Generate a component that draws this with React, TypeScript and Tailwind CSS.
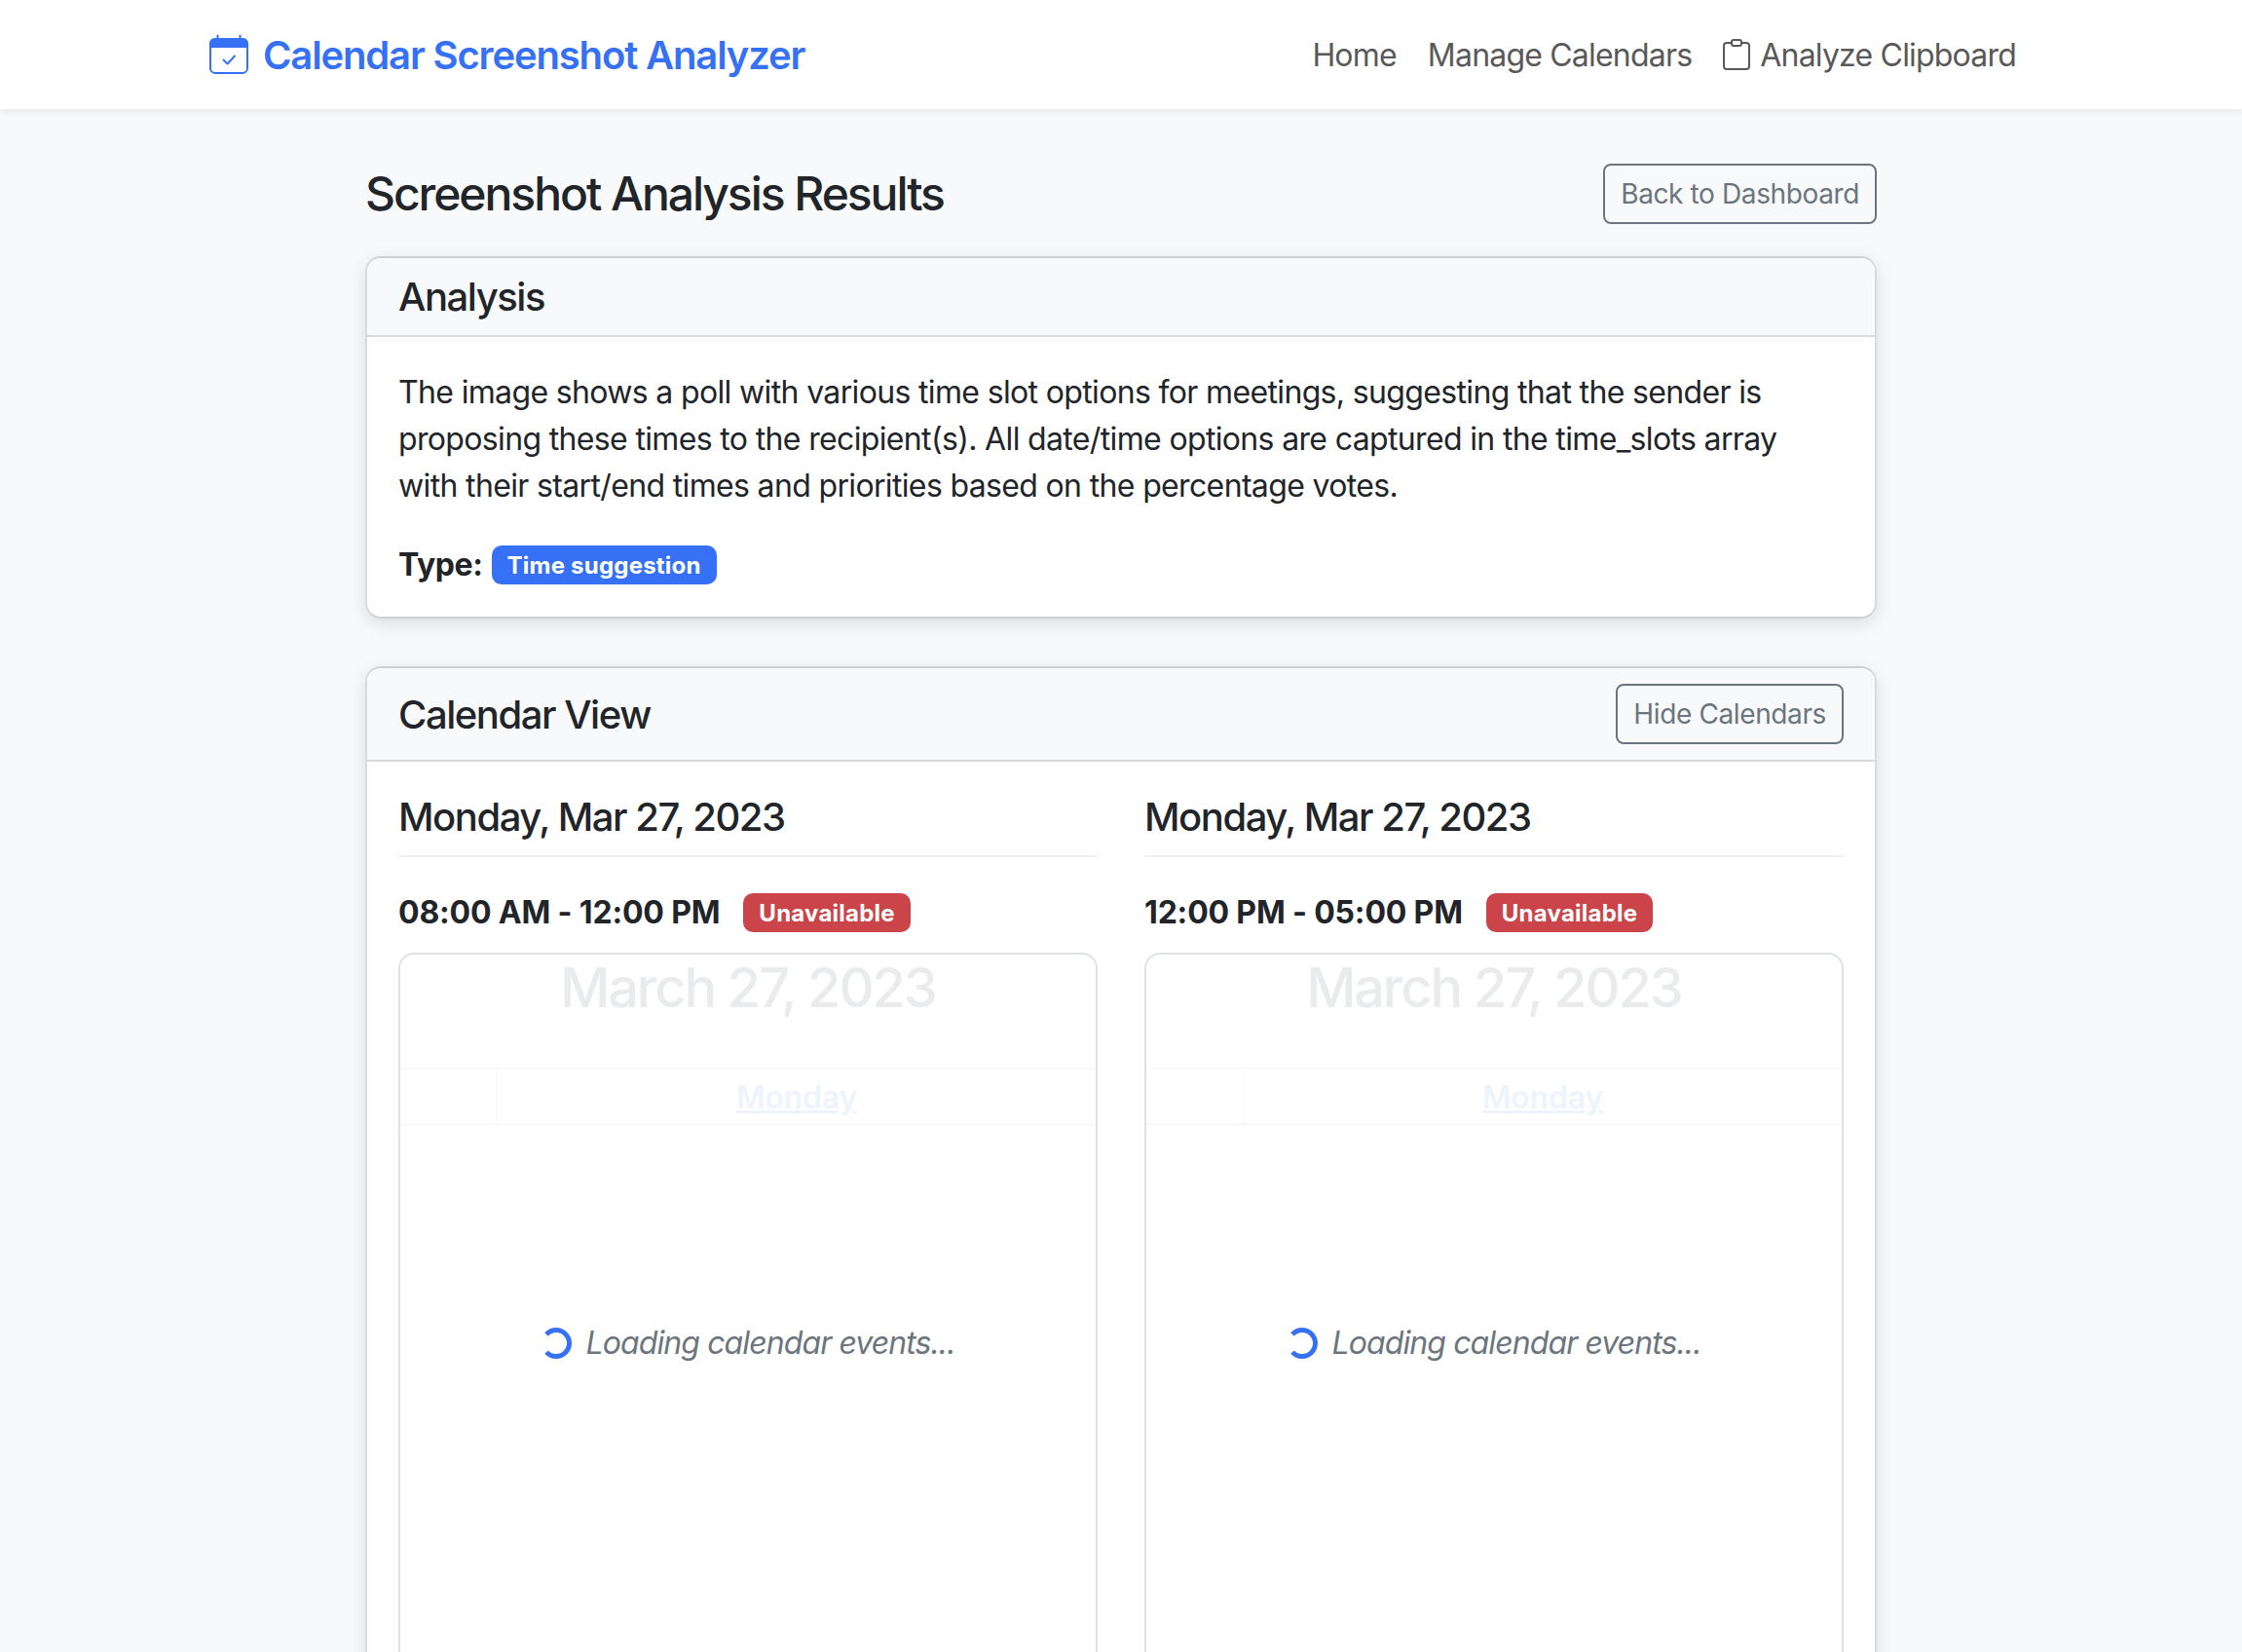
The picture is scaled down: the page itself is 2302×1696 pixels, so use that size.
const font = { fontFamily: 'Inter, "Noto Sans", sans-serif' };

function CalendarIcon() {
  return (
    <svg width="42" height="42" viewBox="0 0 42 42" className="shrink-0 text-[#3671f5]">
      <path d="M9.5 1.5v4M32.5 1.5v4" stroke="currentColor" strokeWidth="2" strokeLinecap="round" />
      <path d="M1 10a6 6 0 0 1 6-6h28a6 6 0 0 1 6 6v4H1z" fill="currentColor" />
      <rect x="2" y="5" width="38" height="35" rx="5" fill="none" stroke="currentColor" strokeWidth="2" />
      <path d="M15.5 26.5l4 4 7.5-8" fill="none" stroke="currentColor" strokeWidth="2" strokeLinecap="round" strokeLinejoin="round" />
    </svg>
  );
}

function ClipboardIcon() {
  return (
    <svg width="28" height="32" viewBox="0 0 28 32" className="shrink-0 text-[#595959]">
      <path d="M9 4H4a3 3 0 0 0-3 3v21a3 3 0 0 0 3 3h20a3 3 0 0 0 3-3V7a3 3 0 0 0-3-3h-5" fill="none" stroke="currentColor" strokeWidth="2" />
      <rect x="9" y="1" width="10" height="6" rx="2" fill="none" stroke="currentColor" strokeWidth="2" />
    </svg>
  );
}

function Spinner() {
  return (
    <svg width="32" height="32" viewBox="0 0 32 32" className="shrink-0">
      <circle cx="15" cy="16" r="13.5" fill="none" stroke="#3671f5" strokeWidth="5" strokeDasharray="65 19.8" strokeDashoffset="-52" />
    </svg>
  );
}

function OutlineButton({ label }: { label: string }) {
  return (
    <button className="h-[62px] rounded-lg border-2 border-[#6c757d] px-4 text-[28px] leading-[42px] tracking-[-0.38px] text-[#6c757d]">
      {label}
    </button>
  );
}

function Badge({ label, color }: { label: string; color: string }) {
  return (
    <span className={`inline-flex h-10 items-center rounded-[10px] px-4 pt-[2px] text-[24px] leading-none font-bold tracking-[0.22px] text-white ${color}`}>
      {label}
    </span>
  );
}

function CalendarColumn({ time }: { time: string }) {
  return (
    <div className="min-w-0">
      <h5 className="border-b-2 border-[#f0f0f0] pb-[15px] text-[40px] leading-[48px] font-medium tracking-[-1.45px] text-[#212529]">
        Monday, Mar 27, 2023
      </h5>
      <div className="mt-[37px] flex h-10 items-center gap-[24px]">
        <span className="text-[32px] leading-[48px] font-bold tracking-[-0.17px] text-[#212529]">{time}</span>
        <Badge label="Unavailable" color="bg-[#cb444a]" />
      </div>
      <div className="relative mt-[21px] h-[800px] rounded-2xl border-2 border-[#dee2e6] bg-white">
        <div className="pt-[2px] text-center text-[56px] leading-[64px] font-medium tracking-[-2.15px] text-[#eaebec]">March 27, 2023</div>
        <div className="mt-[50px] flex h-[60px] border-t-2 border-b-[3px] border-[#fafafa]">
          <div className="w-[100px] border-r-2 border-[#fafafa]" />
          <div className="flex flex-1 items-center justify-center pt-[2px] text-[32px] font-semibold tracking-[-0.2px] text-[#eef3fe] underline">
            Monday
          </div>
        </div>
        <div className="absolute inset-0 flex items-center justify-center gap-[14px] pt-[2px]">
          <Spinner />
          <span className="text-[32px] leading-[48px] tracking-[-0.9px] text-[#6c757d] italic">Loading calendar events...</span>
        </div>
      </div>
    </div>
  );
}

export default function App() {
  return (
    <div className="h-[1696px] overflow-hidden bg-[#f8f9fa]" style={font}>
      <nav className="flex h-[112px] items-center justify-between bg-white pr-[232px] pl-[214px] shadow-[0_2px_8px_rgba(0,0,0,0.08)]">
        <a className="flex items-center gap-[14px] text-[40px] font-semibold tracking-[-1.15px] text-[#3671f5]">
          <CalendarIcon />
          <span className="pt-[2px]">Calendar Screenshot Analyzer</span>
        </a>
        <div className="flex items-center gap-8 text-[32px] leading-[48px] tracking-[-0.8px] text-[#595959]">
          <a className="pt-[2px]">Home</a>
          <a className="pt-[2px]">Manage Calendars</a>
          <a className="flex items-center gap-[10px]">
            <ClipboardIcon />
            <span className="pt-[2px]">Analyze Clipboard</span>
          </a>
        </div>
      </nav>

      <main className="mx-[375px] pt-[56px]">
        <div className="flex h-[62px] items-center justify-between">
          <h3 className="text-[48px] font-medium tracking-[-2.05px] text-[#212529]">Screenshot Analysis Results</h3>
          <OutlineButton label="Back to Dashboard" />
        </div>

        <section className="mt-[33px] overflow-hidden rounded-2xl border-2 border-[#d0d1d3] border-x-[#d9dadc] bg-white shadow-[0_5px_18px_rgba(0,0,0,0.12)]">
          <div className="flex h-[81px] items-center border-b-2 border-[#d9dadb] bg-[#f8f9fa] px-8 pt-[1px]">
            <h5 className="text-[40px] font-medium tracking-[-1.45px] text-[#212529]">Analysis</h5>
          </div>
          <div className="px-8 pt-[33px] pb-[29px]">
            <p className="pr-6 text-[32px] leading-[48px] tracking-[-0.65px] text-[#212529]">
              The image shows a poll with various time slot options for meetings, suggesting that the sender is proposing these times to the recipient(s). All date/time options are captured in the time_slots array with their start/end times and priorities based on the percentage votes.
            </p>
            <div className="mt-[33px] flex items-center gap-[9px]">
              <strong className="text-[32px] leading-[48px] font-bold tracking-[-0.4px] text-[#212529]">Type:</strong>
              <Badge label="Time suggestion" color="bg-[#3671f5]" />
            </div>
          </div>
        </section>

        <section className="mt-[49px] rounded-t-2xl border-2 border-[#d0d1d3] border-x-[#d9dadc] bg-white shadow-[0_5px_18px_rgba(0,0,0,0.12)]">
          <div className="flex h-[96px] items-center justify-between rounded-t-2xl border-b-2 border-[#d9dadb] bg-[#f8f9fa] px-8">
            <h5 className="pt-[2px] text-[40px] font-medium tracking-[-1.45px] text-[#212529]">Calendar View</h5>
            <OutlineButton label="Hide Calendars" />
          </div>
          <div className="grid grid-cols-2 gap-12 px-8 pt-[33px]">
            <CalendarColumn time="08:00 AM - 12:00 PM" />
            <CalendarColumn time="12:00 PM - 05:00 PM" />
          </div>
        </section>
      </main>
    </div>
  );
}
